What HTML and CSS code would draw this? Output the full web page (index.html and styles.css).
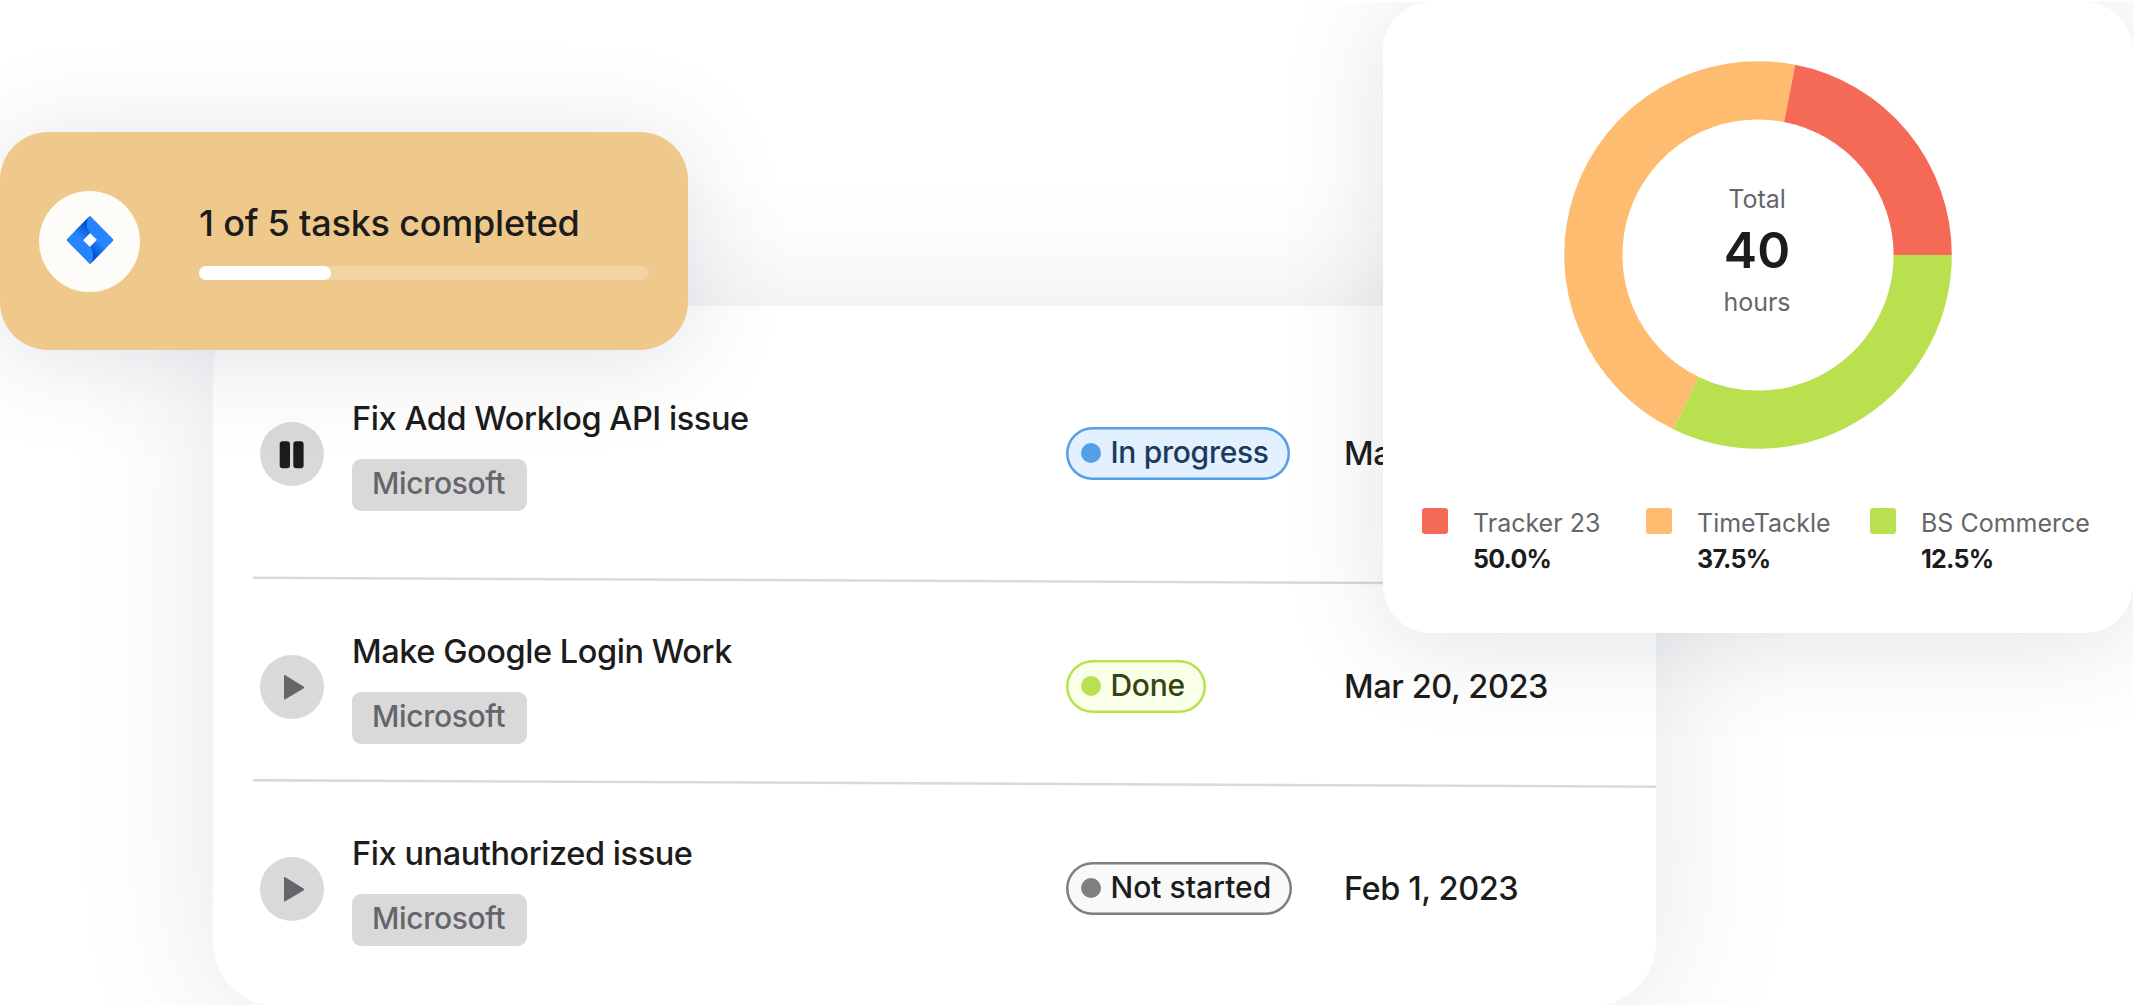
FILE: index.html
```html
<!DOCTYPE html>
<html lang="en">
<head>
<meta charset="utf-8">
<title>Task tracking</title>
<link rel="stylesheet" href="styles.css">
</head>
<body>
<main class="stage">
  <section class="tasks">
    <article class="task">
      <span class="control">
        <svg width="64" height="64" viewBox="0 0 64 64"><rect x="19.7" y="19.3" width="10.3" height="27" rx="3" fill="#1c1c1c"/><rect x="33.300" y="19.3" width="10.3" height="27" rx="3" fill="#1c1c1c"/></svg>
      </span>
      <div class="info"><h2 class="name">Fix Add Worklog API issue</h2><span class="tag">Microsoft</span></div>
      <div class="state"><span class="pill pill-progress"><i class="dot"></i>In progress</span></div>
      <time class="date">Mar 20, 2023</time>
    </article>
    <svg class="rule" viewBox="0 0 1403 10"><line x1="0" y1="1.7" x2="1403" y2="8.2"/></svg>
    <article class="task task-second">
      <span class="control">
        <svg width="64" height="64" viewBox="0 0 64 64"><path d="M24 21v22.6q0 1.4 1.3.7L43.500 33.4q1.2-.9 0-1.8L25.300 20.2q-1.3-.6-1.3.8z" fill="#65656c"/></svg>
      </span>
      <div class="info"><h2 class="name">Make Google Login Work</h2><span class="tag">Microsoft</span></div>
      <div class="state"><span class="pill pill-done"><i class="dot"></i>Done</span></div>
      <time class="date">Mar 20, 2023</time>
    </article>
    <svg class="rule" viewBox="0 0 1403 10"><line x1="0" y1="1.2" x2="1403" y2="7.7"/></svg>
    <article class="task task-third">
      <span class="control">
        <svg width="64" height="64" viewBox="0 0 64 64"><path d="M24 21v22.6q0 1.4 1.3.7L43.500 33.4q1.2-.9 0-1.8L25.300 20.2q-1.3-.6-1.3.8z" fill="#65656c"/></svg>
      </span>
      <div class="info"><h2 class="name">Fix unauthorized issue</h2><span class="tag">Microsoft</span></div>
      <div class="state"><span class="pill pill-idle"><i class="dot"></i>Not started</span></div>
      <time class="date">Feb 1, 2023</time>
    </article>
  </section>

  <section class="summary">
    <span class="logo">
      <svg width="48" height="50" viewBox="0 0 48 50">
        <defs>
          <linearGradient id="ga" gradientUnits="userSpaceOnUse" x1="22" y1="9" x2="11" y2="20"><stop offset=".1" stop-color="#0052cc"/><stop offset="1" stop-color="#2684ff"/></linearGradient>
          <linearGradient id="gb" gradientUnits="userSpaceOnUse" x1="26" y1="41" x2="37" y2="30"><stop offset=".1" stop-color="#0052cc"/><stop offset="1" stop-color="#2684ff"/></linearGradient>
        </defs>
        <path d="M24 .8 46.7 23.8Q47.7 25 46.7 26.2L24 49.2 1.3 26.2Q.3 25 1.3 23.8ZM24 18 17 25 24 32 31 25Z" fill="#2684ff" fill-rule="evenodd"/>
        <path d="M24 .8C19.800 5 19.800 13.500 24 18L17 25 9 16.100Z" fill="url(#ga)"/>
        <path d="M24 49.200C28.200 45 28.200 36.500 24 32L31 25 39 33.900Z" fill="url(#gb)"/>
      </svg>
    </span>
    <div class="summary-body">
      <p class="summary-text">1 of 5 tasks completed</p>
      <div class="track"><div class="fill"></div></div>
    </div>
  </section>

  <section class="report">
    <div class="donut">
      <svg class="ring" viewBox="-194 -194 388 388">
        <g fill="none" stroke-width="58.200">
          <path d="M-71.940 148.160A164.700 164.700 0 0 1 31.650 -161.630" stroke="#febc70"/>
          <path d="M31.650 -161.630A164.700 164.700 0 0 1 164.700 0" stroke="#f46a57"/>
          <path d="M164.700 0A164.700 164.700 0 0 1 -71.940 148.160" stroke="#b9e14f"/>
        </g>
      </svg>
      <div class="total"><span class="unit">Total</span><strong class="amount">40</strong><span class="unit unit-hours">hours</span></div>
    </div>
    <ul class="legend">
      <li class="entry"><i class="swatch red"></i><div class="caption"><span class="label">Tracker 23</span><b class="share">50.0%</b></div></li>
      <li class="entry"><i class="swatch orange"></i><div class="caption"><span class="label">TimeTackle</span><b class="share">37.5%</b></div></li>
      <li class="entry"><i class="swatch green"></i><div class="caption"><span class="label">BS Commerce</span><b class="share">12.5%</b></div></li>
    </ul>
  </section>
</main>
</body>
</html>
```
FILE: styles.css
```css
* { box-sizing: border-box; margin: 0; padding: 0; }
body { background: #fff; font-family: Inter, "Liberation Sans", sans-serif; color: #1c1c1c; }
svg { display: block; }
.stage { position: relative; width: 2133px; height: 1005px; overflow: hidden; }

/* Task list */
.tasks {
  position: absolute; left: 213px; top: 306px; width: 1443px; height: 700px;
  padding: 83px 0 0 40px; background: #fff; border-radius: 64px;
  box-shadow: 0 8px 140px rgba(60, 80, 90, .14);
}
.task { display: grid; grid-template-columns: 92px 714px 278px 1fr; height: 187px; padding-left: 7px; }
.task-second { height: 193px; padding-top: 36px; }
.task-third { padding-top: 35px; }
.control { width: 64px; height: 64px; margin-top: 33px; border-radius: 50%; background: #d9d9d9; }
.info { display: flex; flex-direction: column; align-items: flex-start; }
.name { height: 58px; padding-top: 10px; font-size: 32.500px; line-height: 40px; font-weight: 500; letter-spacing: -.430px; white-space: nowrap; }
.tag { width: 175px; height: 52px; margin-top: 12px; padding: 0 20px; border-radius: 9px; background: #d9d9d9; color: #65656c; font-size: 30px; line-height: 48px; font-weight: 500; letter-spacing: -.340px; }
.state { padding-top: 38px; }
.pill { display: inline-flex; align-items: center; gap: 10px; height: 53px; padding: 0 0 3px 14.500px; border-radius: 27px; font-size: 30px; font-weight: 500; white-space: nowrap; }
.dot { width: 20px; height: 20px; border-radius: 50%; position: relative; top: 1px; }
.pill-progress { width: 224px; letter-spacing: -.300px; color: #183b5e; background: #e2f0ff; box-shadow: inset 0 0 0 2.500px #549fe7; }
.pill-progress .dot { background: #549fe7; }
.pill-done { width: 140px; letter-spacing: -.300px; color: #344512; background: #faffe9; box-shadow: inset 0 0 0 2.500px #b9e14f; }
.pill-done .dot { background: #b9e14f; }
.pill-idle { width: 226px; color: #1c1c1c; background: #f9f9f9; box-shadow: inset 0 0 0 2.500px #7f7f7f; }
.pill-idle .dot { background: #7f7f7f; }
.date { padding-top: 45px; font-size: 32.500px; line-height: 40px; font-weight: 500; letter-spacing: -.420px; white-space: nowrap; }
.rule { width: 1403px; height: 10px; }
.rule line { stroke: #d9d9d9; stroke-width: 2.500; }

/* Completion banner */
.summary {
  position: absolute; left: 0; top: 132px; width: 688px; height: 218px;
  display: flex; padding: 59px 39px 0; background: #efc98b; border-radius: 48px;
  box-shadow: 0 8px 100px rgba(50, 60, 90, .15);
}
.logo { display: flex; align-items: center; justify-content: center; width: 101px; height: 101px; padding-bottom: 3px; border-radius: 50%; background: #fefcf8; }
.summary-body { margin-left: 59px; width: 450px; }
.summary-text { height: 75px; padding-top: 10px; font-size: 36px; line-height: 44px; font-weight: 500; letter-spacing: -.200px; white-space: nowrap; }
.track { height: 14px; border-radius: 7px; background: #f2d4a3; }
.fill { width: 132px; height: 14px; border-radius: 7px; background: #fff; }

/* Hours report */
.report {
  position: absolute; left: 1383px; top: 2px; width: 750px; height: 631px;
  padding-top: 59px; background: #fff; border-radius: 48px;
  box-shadow: 0 8px 100px rgba(50, 60, 80, .15);
  clip-path: inset(0 0 -200px -200px);
}
.donut { display: grid; width: 388px; height: 388px; margin-left: 181px; }
.ring, .total { grid-area: 1 / 1; }
.ring { width: 388px; height: 388px; }
.total { display: flex; flex-direction: column; align-items: center; padding: 123px 2px 0 0; }
.unit { color: #65656c; font-size: 25px; line-height: 30px; }
.amount { margin-top: 6px; font-size: 50px; line-height: 60px; font-weight: 600; }
.unit-hours { margin-top: 7px; }
.legend { display: grid; grid-template-columns: repeat(3, 224px); margin: 59px 0 0 39px; list-style: none; }
.entry { display: flex; gap: 25px; white-space: nowrap; }
.caption { margin-top: -3px; }
.swatch { width: 26px; height: 26px; border-radius: 3px; }
.red { background: #f46a57; }
.orange { background: #febc70; }
.green { background: #b9e14f; }
.label, .share { display: block; font-size: 25px; line-height: 36px; }
.label { color: #65656c; }
.share { font-weight: 700; letter-spacing: -.750px; }
```
